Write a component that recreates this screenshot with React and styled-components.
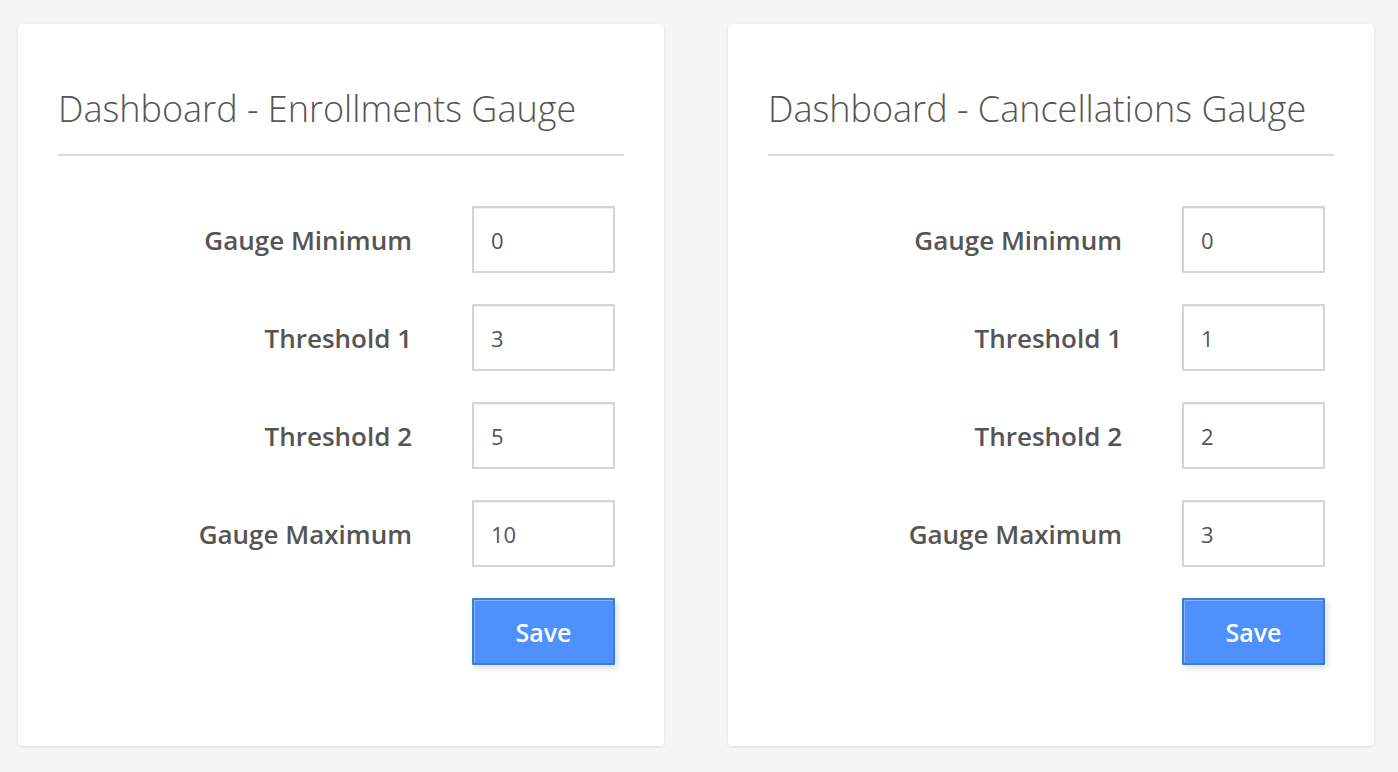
import styled, { createGlobalStyle } from "styled-components";

const GlobalStyle = createGlobalStyle`
  body {
    margin: 0;
    background: #f5f5f5;
    font-family: "Open Sans", "Noto Sans", sans-serif;
    color: #555;
  }
`;

const Page = styled.div`
  display: flex;
  gap: 64px;
  padding: 24px 0 26px 18px;
`;

const Card = styled.section`
  flex: none;
  width: 646px;
  box-sizing: border-box;
  background: #fff;
  border-radius: 4px;
  box-shadow: 0 1px 3px rgba(0, 0, 0, 0.12);
  padding: 63px 40px 81px;
`;

const Title = styled.h2`
  margin: 0 0 50px;
  padding-bottom: 24px;
  border-bottom: 2px solid #dcdcdc;
  font-size: 36px;
  line-height: 43px;
  font-weight: 300;
  color: #555;
`;

const Form = styled.div`
  display: grid;
  grid-template-columns: 1fr 143px;
  column-gap: 60px;
  row-gap: 31px;
  padding-right: 9px;
  align-items: center;
`;

const Label = styled.label`
  text-align: right;
  font-size: 26px;
  font-weight: 600;
  color: #555;
`;

const Input = styled.input`
  box-sizing: border-box;
  width: 143px;
  height: 67px;
  border: 2px solid #d4d4d4;
  border-radius: 1px;
  padding: 0 17px;
  font-family: inherit;
  font-size: 22px;
  color: #555;
  box-shadow: inset 0 1px 1px rgba(0, 0, 0, 0.06);
  outline: none;
`;

const SaveButton = styled.button`
  grid-column: 2;
  box-sizing: border-box;
  width: 143px;
  height: 67px;
  background: #4d90fe;
  border: 2px solid #3a7fd0;
  border-radius: 1px;
  box-shadow: inset 1px 1px 0 rgba(255, 255, 255, 0.3),
    2px 3px 6px rgba(0, 0, 0, 0.15);
  color: #fff;
  font-family: inherit;
  font-size: 25px;
  font-weight: 600;
  cursor: pointer;
`;

const gauges = [
  {
    title: "Dashboard - Enrollments Gauge",
    values: ["0", "3", "5", "10"],
  },
  {
    title: "Dashboard - Cancellations Gauge",
    values: ["0", "1", "2", "3"],
  },
];

const labels = ["Gauge Minimum", "Threshold 1", "Threshold 2", "Gauge Maximum"];

function GaugeCard({ title, values }) {
  return (
    <Card>
      <Title>{title}</Title>
      <Form>
        {labels.flatMap((label, i) => [
          <Label key={label}>{label}</Label>,
          <Input key={label + "-in"} defaultValue={values[i]} />,
        ])}
        <SaveButton>Save</SaveButton>
      </Form>
    </Card>
  );
}

function App() {
  return (
    <>
      <GlobalStyle />
      <Page>
        {gauges.map((g) => (
          <GaugeCard key={g.title} {...g} />
        ))}
      </Page>
    </>
  );
}

export default App;
